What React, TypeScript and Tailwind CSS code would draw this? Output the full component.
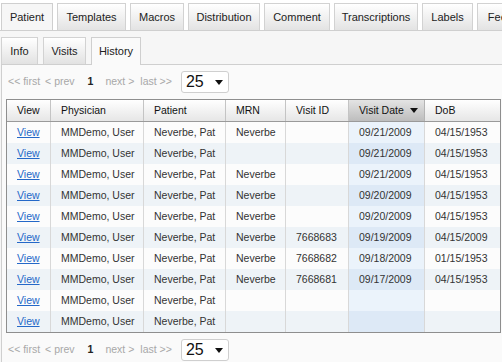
import React from 'react';

const topTabs = [
  { label: 'Patient', w: 'w-[52px]', active: true },
  { label: 'Templates', w: 'w-[69px]' },
  { label: 'Macros', w: 'w-[54px]' },
  { label: 'Distribution', w: 'w-[72px]' },
  { label: 'Comment', w: 'w-[66px]' },
  { label: 'Transcriptions', w: 'w-[84px]' },
  { label: 'Labels', w: 'w-[51px]' },
  { label: 'Feedback', w: 'w-[70px]' },
];

const subTabs = [
  { label: 'Info', w: 'w-[37px]' },
  { label: 'Visits', w: 'w-[43px]' },
  { label: 'History', w: 'w-[50px]', active: true },
];

const rows = [
  ['Neverbe', '', '09/21/2009', '04/15/1953'],
  ['', '', '09/21/2009', '04/15/1953'],
  ['Neverbe', '', '09/21/2009', '04/15/1953'],
  ['Neverbe', '', '09/20/2009', '04/15/1953'],
  ['Neverbe', '', '09/20/2009', '04/15/1953'],
  ['Neverbe', '7668683', '09/19/2009', '04/15/2009'],
  ['Neverbe', '7668682', '09/18/2009', '01/15/1953'],
  ['Neverbe', '7668681', '09/17/2009', '04/15/1953'],
  ['', '', '', ''],
  ['', '', '', ''],
];

const headers = ['View', 'Physician', 'Patient', 'MRN', 'Visit ID', 'Visit Date', 'DoB'];

function Pager() {
  return (
    <div className="flex h-[34px] items-center pl-[6px] text-[10.5px] text-[#a8a8a8]">
      <span>&lt;&lt; first</span>
      <span className="ml-[5px]">&lt; prev</span>
      <span className="ml-[13px] font-bold text-[#222]">1</span>
      <span className="ml-[12px]">next &gt;</span>
      <span className="ml-[6px]">last &gt;&gt;</span>
      <div className="ml-[9px] flex h-[22px] w-[48px] items-center justify-between rounded-[3px] border border-[#cfcfcf] bg-white pl-[4px] pr-[5px] text-[16px] text-[#111]">
        <span>25</span>
        <span className="h-0 w-0 border-x-[4px] border-t-[5px] border-x-transparent border-t-[#111]" />
      </div>
    </div>
  );
}

export default function App() {
  return (
    <div className="h-[362px] w-[502px] overflow-hidden bg-white font-['Liberation_Sans',Arial,sans-serif] text-[#333]">
      {/* top tabs */}
      <div className="flex h-[31px] items-end gap-[4px] overflow-hidden border-b border-[#cfcfcf] pl-[1px]">
        {topTabs.map((t) =>
          t.active ? (
            <div
              key={t.label}
              className={`${t.w} relative -mb-px flex h-[28px] shrink-0 items-center justify-center border border-b-0 border-[#cfcfcf] bg-[#f6f6f6] text-[11px] text-[#222]`}
            >
              {t.label}
            </div>
          ) : (
            <div
              key={t.label}
              className={`${t.w} flex h-[27px] shrink-0 items-center justify-center border border-b-0 border-[#d2d2d2] bg-gradient-to-b from-white to-[#e3e3e3] text-[11px] text-[#222]`}
            >
              {t.label}
            </div>
          )
        )}
      </div>

      <div className="bg-[#f6f6f6] pt-[6px]">
        {/* sub tabs */}
        <div className="flex h-[27px] items-end gap-[5px] pl-[1px]">
          {subTabs.map((t) =>
            t.active ? (
              <div
                key={t.label}
                className={`${t.w} relative z-10 -mb-px flex h-[28px] items-center justify-center border border-b-0 border-[#cfcfcf] bg-[#fafafa] text-[11px] text-[#222]`}
              >
                {t.label}
              </div>
            ) : (
              <div
                key={t.label}
                className={`${t.w} flex h-[27px] items-center justify-center border border-b-0 border-[#d2d2d2] bg-gradient-to-b from-white to-[#e2e2e2] text-[11px] text-[#222]`}
              >
                {t.label}
              </div>
            )
          )}
        </div>

        {/* content */}
        <div className="ml-[1px] h-[300px] border-l border-t border-[#cfcfcf] bg-[#fafafa]">
          <Pager />

          <div className="ml-[4px] w-[495px] border border-[#8e8e8e] text-[10.5px]">
            <div className="grid grid-cols-[44px_93px_82px_60px_63px_76px_75px] border-b border-[#9a9a9a]">
              {headers.map((h, i) =>
                h === 'Visit Date' ? (
                  <div
                    key={h}
                    className="flex h-[21px] items-center gap-[6px] border-r border-[#b4b4b4] bg-gradient-to-b from-[#e4e4e4] to-[#bdbdbd] pl-[10px] text-[#111]"
                  >
                    Visit Date
                    <span className="h-0 w-0 border-x-[4px] border-t-[5px] border-x-transparent border-t-[#111]" />
                  </div>
                ) : (
                  <div
                    key={h}
                    className={`flex h-[21px] items-center bg-gradient-to-b from-white to-[#e6e6e6] pl-[10px] text-[#111] ${i < 6 ? 'border-r border-[#c4c4c4]' : ''}`}
                  >
                    {h}
                  </div>
                )
              )}
            </div>

            {rows.map((r, ri) => {
              const even = ri % 2 === 1;
              const bg = even ? 'bg-[#eef3f7]' : 'bg-[#fcfcfc]';
              const dateBg = even ? 'bg-[#dde9f6]' : 'bg-[#ebf3fb]';
              const cells = ['View', 'MMDemo, User', 'Neverbe, Pat', r[0], r[1], r[2], r[3]];
              return (
                <div key={ri} className="grid grid-cols-[44px_93px_82px_60px_63px_76px_75px]">
                  {cells.map((c, ci) => (
                    <div
                      key={ci}
                      className={`flex h-[21px] items-center pl-[10px] ${ci === 5 ? dateBg : bg} ${ci < 6 ? 'border-r border-[#d8d8d8]' : ''}`}
                    >
                      {ci === 0 ? (
                        <a href="#" className="text-[#2468c8] underline">
                          {c}
                        </a>
                      ) : (
                        <span className="text-[#333]">{c}</span>
                      )}
                    </div>
                  ))}
                </div>
              );
            })}
          </div>

          <Pager />
        </div>
      </div>
    </div>
  );
}
